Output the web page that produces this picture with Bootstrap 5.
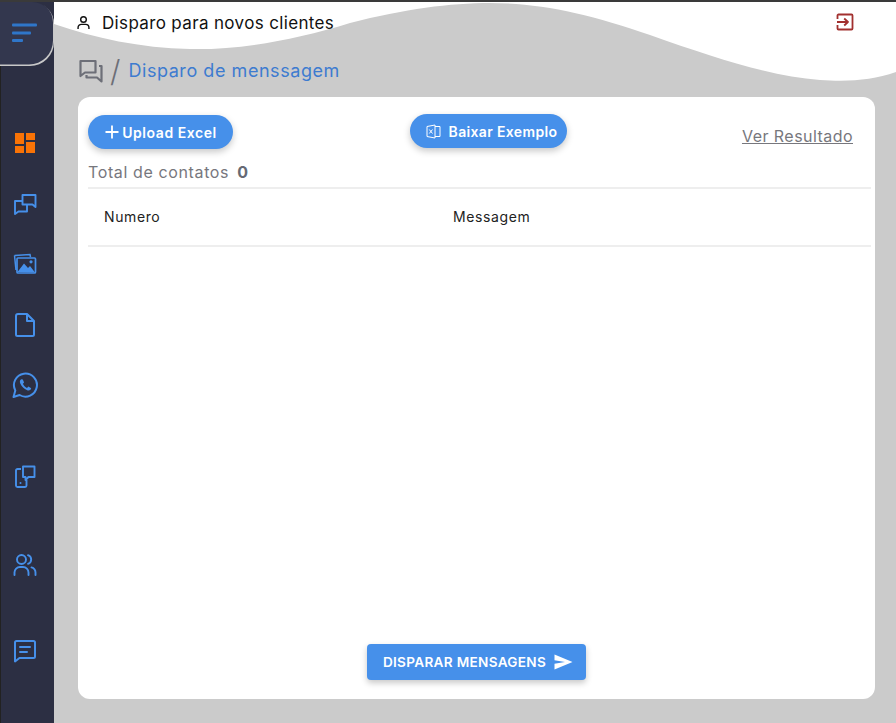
<!DOCTYPE html>
<html lang="pt-BR">
<head>
<meta charset="utf-8">
<title>Disparo de mensagem</title>
<link href="https://cdn.jsdelivr.net/npm/bootstrap@5.3.0/dist/css/bootstrap.min.css" rel="stylesheet">
<style>
html,body{height:100%;margin:0}
body{background:#cbcbcb;font-family:"Inter","Noto Sans",sans-serif;overflow:hidden;position:relative}
.top-edge{position:absolute;left:0;top:0;right:0;height:2px;background:#3a3a3a;z-index:5}
.wave-bg{position:absolute;left:0;top:0;width:896px;height:100px;z-index:0}
.app-shell{position:relative;z-index:1;height:723px}
.side-rail{width:54px;flex:none;background:#2c2f43;border-left:1px solid #222;height:723px}
.rail-toggle{height:64px;padding-top:21px;padding-left:12px;background:#33374e;box-shadow:inset -1px -1.5px 0 #c8c8c8;border-top-right-radius:22px;border-bottom-right-radius:24px;margin-top:2px;width:54px;margin-left:-1px}
.rail-toggle svg{display:block}
.rail-item{height:30px;width:54px;margin-left:-1px;padding-right:4px}
.rail-item svg{display:block}
.i1{margin-top:62px}.i2{margin-top:31px}.i3{margin-top:30px}.i4{margin-top:31px}.i5{margin-top:30px}.i6{margin-top:62px}.i7{margin-top:58px}.i8{margin-top:56px}
.page-col{width:842px;flex:none}
.head-row{height:44px;padding:3px 42px 0 22px}
.head-user{margin-top:-3px}
.head-title{font-size:17px;color:#111;margin-left:11px;letter-spacing:.35px}
.head-exit{margin-top:-3px}
.crumb-row{height:53px;padding:0 0 0 25px}
.crumb-sep{font-size:30px;color:#6d6f78;margin:0 8px 0 7px;font-weight:300;line-height:1}
.crumb-text{font-size:18px;color:#3d7bd0;letter-spacing:.55px}
.sheet{width:797px;height:602px;margin-left:24px;background:#fff;border-radius:12px;padding:17px 4px 19px 10px;border:0}
.pill-btn{background:#4690ea;color:#fff;border:0;border-radius:17px;height:34px;font-size:14px;font-weight:600;box-shadow:0 3px 7px rgba(0,0,0,.22);padding:0;white-space:nowrap}
.pill-up{width:145px;margin-top:1px;letter-spacing:.55px;padding-left:1px}
.pill-up.gap-1{gap:3px!important}
.pill-down{width:157px;margin-left:177px;letter-spacing:.35px;padding-left:6px}
.res-link{color:#77777d;font-size:16px;margin-left:auto;margin-right:18px;margin-top:10px;letter-spacing:.45px}
.total-row{font-size:16px;color:#77777d;margin-top:11px;height:24px;line-height:24px;letter-spacing:.62px}
.total-num{font-weight:700;color:#666a74;margin-left:8px}
.plain-table{margin:3px 0 0;border-top:2px solid #eee;width:783px;table-layout:fixed}
.plain-table th{font-size:14px;font-weight:400;color:#222;padding:0 16px 2px;height:58px;vertical-align:middle;border-bottom:2px solid #eee;background:transparent;letter-spacing:.6px}
.col-num{width:349px}
.spacer{flex:1}
.fire-btn{width:219px;height:36px;background:#4690ea;color:#fff;border:0;border-radius:4px;font-size:13.6px;font-weight:600;box-shadow:0 3px 6px rgba(0,0,0,.22);margin-left:279px;padding:0 0 0 3px;white-space:nowrap;letter-spacing:.3px}
</style>
</head>
<body>
<div class="top-edge"></div>
<svg class="wave-bg" viewBox="0 0 896 100" aria-hidden="true"><path fill="#fff" d="M0 0H896V72C872 80 850 82 820 80C770 76 715 58 650 35C590 14 540 3 490 3C450 3 405 9 350 23C295 40 240 50 190 49C140 48 95 38 54 24V0Z"/></svg>
<div class="app-shell d-flex">
  <nav class="side-rail d-flex flex-column">
    <div class="rail-toggle">
      <svg width="26" height="20" viewBox="0 0 26 20"><g fill="#2f76c9"><rect x="0" y="0.500" width="25" height="3" rx="1"/><rect x="0" y="8.500" width="19" height="3" rx="1"/><rect x="0" y="16" width="11" height="3" rx="1"/></g></svg>
    </div>
    <div class="rail-item i1 d-flex align-items-center justify-content-center">
      <svg width="22" height="22" viewBox="0 0 22 22"><g fill="#f97306"><rect x="1" y="1" width="9" height="11"/><rect x="12" y="1" width="9" height="7"/><rect x="1" y="14" width="9" height="7"/><rect x="12" y="10" width="9" height="11"/></g></svg>
    </div>
    <div class="rail-item i2 d-flex align-items-center justify-content-center">
      <svg width="24" height="24" viewBox="0 0 24 24" fill="none" stroke="#4690ea" stroke-width="1.900" stroke-linejoin="round"><path d="M9.500 3H22.500V15L19.500 12.500H9.500Z"/><path d="M9 9H2V22L5.500 19.500H14V13"/></svg>
    </div>
    <div class="rail-item i3 d-flex align-items-center justify-content-center">
      <svg width="24" height="22" viewBox="0 0 24 22"><path d="M1.500 2.500L17 1.500L17.500 4" fill="none" stroke="#4690ea" stroke-width="1.500"/><path d="M1.500 2.500L3 17" fill="none" stroke="#4690ea" stroke-width="1.500"/><rect x="4" y="5" width="18.500" height="15" rx="1" fill="none" stroke="#4690ea" stroke-width="1.700"/><path d="M4.500 19L11 10.500L15 15L17 13L22 19.500Z" fill="#4690ea"/><circle cx="18" cy="8.800" r="1.600" fill="#4690ea"/></svg>
    </div>
    <div class="rail-item i4 d-flex align-items-center justify-content-center">
      <svg width="22" height="26" viewBox="0 0 22 26" fill="none" stroke="#4690ea" stroke-width="2" stroke-linejoin="round"><path d="M4 2H13L20 9V22.500A1.500 1.500 0 0 1 18.500 24H3.500A1.500 1.500 0 0 1 2 22.500V4A2 2 0 0 1 4 2Z"/><path d="M13 2V9H20"/></svg>
    </div>
    <div class="rail-item i5 d-flex align-items-center justify-content-center">
      <svg width="26" height="26" viewBox="0 0 26 26"><path d="M1.500 25L3.300 18.500A11.500 11.500 0 1 1 7.600 23Z" fill="none" stroke="#4690ea" stroke-width="2" stroke-linejoin="round"/><path d="M9.200 7.200C8 8 7.300 9.500 8.400 11.800C9.600 14.500 12 17 15.200 18.200C17.200 18.900 18.700 18 19.200 16.200L16.400 14.600L15 15.900C13.300 15.200 11.600 13.400 10.900 11.800L12.100 10.400L10.800 7.400Z" fill="#4690ea"/></svg>
    </div>
    <div class="rail-item i6 d-flex align-items-center justify-content-center">
      <svg width="24" height="24" viewBox="0 0 24 24" fill="none" stroke="#4690ea" stroke-width="1.900" stroke-linejoin="round"><path d="M8 4H4.500A1.500 1.500 0 0 0 3 5.500V20.500A1.500 1.500 0 0 0 4.500 22H12A1.500 1.500 0 0 0 13.500 20.500V15"/><path d="M10 1.500H21.500V12H15.500L12.500 15V12H10Z"/><circle cx="7.500" cy="18" r="1" fill="#4690ea" stroke="none"/></svg>
    </div>
    <div class="rail-item i7 d-flex align-items-center justify-content-center">
      <svg width="24" height="24" viewBox="0 0 24 24" fill="none" stroke="#4690ea" stroke-width="1.900" stroke-linecap="round"><circle cx="8.500" cy="6.500" r="4.500"/><path d="M1.500 22V19.500A5.500 5.500 0 0 1 7 14H10A5.500 5.500 0 0 1 15.500 19.500V22"/><path d="M15 2.200A4.500 4.500 0 0 1 15 10.800"/><path d="M18.500 14.400A5.500 5.500 0 0 1 22.500 19.500V22"/></svg>
    </div>
    <div class="rail-item i8 d-flex align-items-center justify-content-center">
      <svg width="24" height="24" viewBox="0 0 24 24" fill="none" stroke="#4690ea" stroke-width="2" stroke-linejoin="round"><path d="M3.500 2H20.500A1.500 1.500 0 0 1 22 3.500V17.500A1.500 1.500 0 0 1 20.500 19H6.500L2 22.500V3.500A1.500 1.500 0 0 1 3.500 2Z"/><path d="M7 8H17M7 13H14" stroke-linecap="round"/></svg>
    </div>
  </nav>
  <main class="page-col d-flex flex-column">
    <header class="head-row d-flex align-items-center">
      <svg class="head-user" width="15" height="15" viewBox="0 0 16 16" fill="none" stroke="#111" stroke-width="1.500"><circle cx="8" cy="4.800" r="3"/><path d="M2.200 14.800V13.500A3.500 3.500 0 0 1 5.700 10H10.300A3.500 3.500 0 0 1 13.800 13.500V14.800"/></svg>
      <span class="head-title">Disparo para novos clientes</span>
      <svg class="head-exit ms-auto" width="18" height="18" viewBox="0 0 18 18" fill="none" stroke="#a2302f" stroke-width="1.800" stroke-linejoin="round"><path d="M1.500 6V2.500A1 1 0 0 1 2.500 1.500H15.500A1 1 0 0 1 16.500 2.500V15.500A1 1 0 0 1 15.500 16.500H2.500A1 1 0 0 1 1.500 15.500V12"/><path d="M1 9H11.500M8.200 5.500L12 9L8.200 12.500"/></svg>
    </header>
    <div class="crumb-row d-flex align-items-center">
      <svg width="24" height="24" viewBox="0 0 24 24" fill="none" stroke="#6d6f78" stroke-width="2.200" stroke-linejoin="round"><path d="M1.500 2H16.500V13.500H6L1.500 17Z"/><path d="M20 7H22.500V22.500L18 18.500H7.500V16"/></svg>
      <span class="crumb-sep">/</span>
      <span class="crumb-text">Disparo de menssagem</span>
    </div>
    <section class="sheet d-flex flex-column">
      <div class="d-flex align-items-start">
        <button type="button" class="btn pill-btn pill-up d-inline-flex align-items-center justify-content-center gap-1">
          <svg width="14" height="14" viewBox="0 0 14 14" stroke="#fff" stroke-width="1.800"><path d="M7 0.500V13.500M0.500 7H13.500"/></svg>Upload Excel
        </button>
        <button type="button" class="btn pill-btn pill-down d-inline-flex align-items-center justify-content-center gap-2">
          <svg width="15" height="15" viewBox="0 0 15 15" fill="none" stroke="#fff" stroke-width="1"><path d="M1 2.500L9 1V14L1 12.500Z"/><path d="M9 2.500H14V12.500H9"/><path d="M3.300 5.500L6.500 9.500M6.500 5.500L3.300 9.500"/></svg>Baixar Exemplo
        </button>
        <a href="#" class="res-link">Ver Resultado</a>
      </div>
      <div class="total-row">Total de contatos<span class="total-num">0</span></div>
      <table class="table plain-table">
        <colgroup><col class="col-num"><col></colgroup>
        <thead><tr><th>Numero</th><th>Messagem</th></tr></thead>
      </table>
      <div class="spacer"></div>
      <button type="button" class="btn fire-btn d-inline-flex align-items-center justify-content-center gap-2">
        DISPARAR MENSAGENS
        <svg width="19" height="16" viewBox="0 0 19 16" fill="#fff"><path d="M0.500 0.500L18.500 8L0.500 15.500V9.800L11 8L0.500 6.200Z"/></svg>
      </button>
    </section>
  </main>
</div>
<script src="https://cdn.jsdelivr.net/npm/bootstrap@5.3.0/dist/js/bootstrap.bundle.min.js"></script>
</body>
</html>
